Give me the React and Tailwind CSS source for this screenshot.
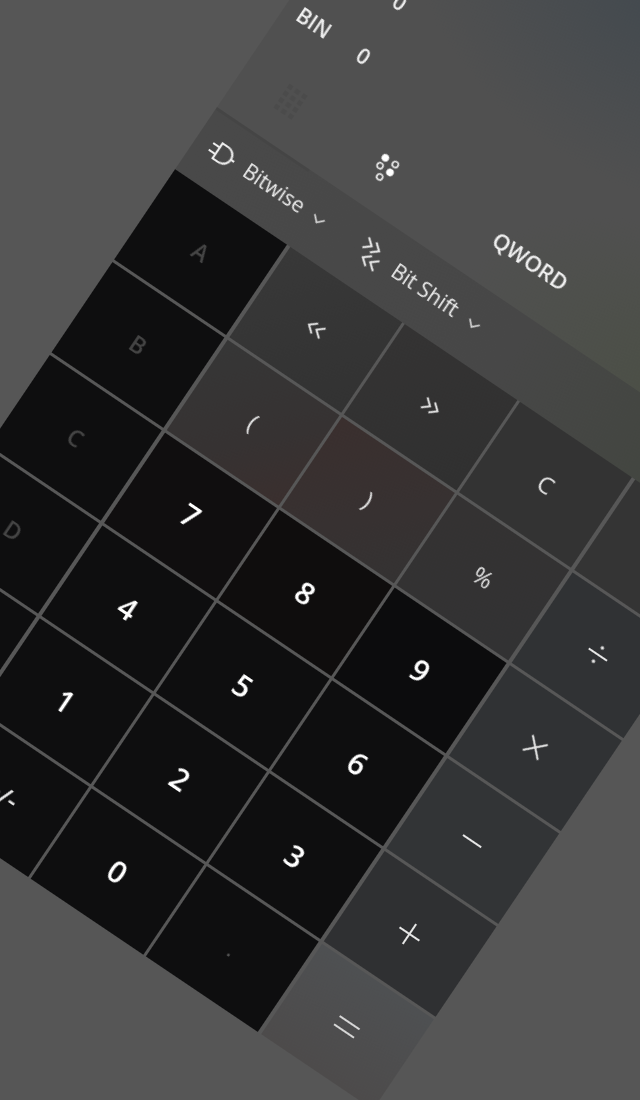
import React from 'react';

const Gate = () => (
  <svg width="30" height="26" viewBox="0 0 30 26" fill="none" stroke="#ececec" strokeWidth="2.2">
    <path d="M9 4h7a9 9 0 0 1 0 18H9z" />
    <path d="M1 9h8M1 17h8" />
    <path d="M25 13h4" />
  </svg>
);

const Shift = () => (
  <svg width="28" height="30" viewBox="0 0 28 30" fill="none" stroke="#e8e8e8" strokeWidth="2.2">
    <path d="M3 2l7 6-7 6M12 2l7 6-7 6" />
    <path d="M16 16l-7 6 7 6M25 16l-7 6 7 6" />
  </svg>
);

const Chevron = () => (
  <svg width="14" height="10" viewBox="0 0 14 10" fill="none" stroke="#dcdcdc" strokeWidth="1.7">
    <path d="M1 2l6 6 6-6" />
  </svg>
);

const BitToggle = () => (
  <svg width="25" height="31" viewBox="0 0 25 31" fill="none" stroke="#ececec" strokeWidth="1.7">
    <circle cx="6" cy="6" r="3.8" fill="#ffffff" stroke="none" />
    <circle cx="18" cy="6" r="3" />
    <circle cx="6" cy="15.5" r="3" />
    <circle cx="18" cy="15.5" r="3.8" fill="#ffffff" stroke="none" />
    <circle cx="12" cy="25" r="3" />
  </svg>
);

const Dialpad = () => (
  <svg width="24" height="32" viewBox="0 0 24 32" fill="#4b4b4b">
    {[0, 1, 2, 3].map((r) =>
      [0, 1, 2].map((c) => <rect key={`${r}-${c}`} x={c * 8.5 + 1} y={r * 8 + 1} width="5" height="5" />)
    )}
  </svg>
);

const Op = ({ d, stroke = '#e6e6e6', children }) => (
  <svg width="32" height="32" viewBox="0 0 32 32" fill="none" stroke={stroke} strokeWidth="2">
    {d && <path d={d} />}
    {children}
  </svg>
);

const digit = 'bg-[#0e0e0f] text-white text-[30px] font-semibold';
const hexKey = 'bg-[#0e0e0f] text-[#454545] text-[23px] font-semibold';
const opText = 'text-[#e6e6e6] text-[24px] font-medium';

const keys = [
  { label: 'A', cls: hexKey },
  { icon: <Op d="M15 10l-7 6 7 6M24 10l-7 6 7 6" />, cls: 'bg-[linear-gradient(135deg,#383838,#323232)]' },
  { icon: <Op d="M8 10l7 6-7 6M17 10l7 6-7 6" />, cls: 'bg-[linear-gradient(135deg,#343333,#303030)]' },
  { label: 'C', cls: `bg-[#333333] ${opText}` },
  { icon: <Op d="M12 9h14v14H12l-6-7z" />, cls: 'bg-[#343434]' },

  { label: 'B', cls: hexKey },
  { label: '(', cls: `bg-[linear-gradient(135deg,#363636,#363232_60%,#3a2f2e)] ${opText}` },
  { label: ')', cls: `bg-[linear-gradient(135deg,#3a2f2e,#373131_60%,#343232)] ${opText}` },
  { label: '%', cls: `bg-[linear-gradient(135deg,#343232,#323233)] ${opText}` },
  {
    icon: (
      <Op d="M5 16h22">
        <circle cx="16" cy="8" r="1.8" fill="#e6e6e6" stroke="none" />
        <circle cx="16" cy="24" r="1.8" fill="#e6e6e6" stroke="none" />
      </Op>
    ),
    cls: 'bg-[#303234]',
  },

  { label: 'C', cls: hexKey },
  { label: '7', cls: 'bg-[#100e0f] text-white text-[30px] font-semibold' },
  { label: '8', cls: 'bg-[#0f0d0d] text-white text-[30px] font-semibold' },
  { label: '9', cls: 'bg-[#0c0c0d] text-white text-[30px] font-semibold' },
  { icon: <Op d="M7 7l18 18M25 7L7 25" />, cls: 'bg-[#303234]' },

  { label: 'D', cls: hexKey },
  { label: '4', cls: digit },
  { label: '5', cls: digit },
  { label: '6', cls: digit },
  { icon: <Op d="M5 16h22" />, cls: 'bg-[#323436]' },

  { label: 'E', cls: hexKey },
  { label: '1', cls: digit },
  { label: '2', cls: digit },
  { label: '3', cls: digit },
  { icon: <Op d="M16 4v24M4 16h24" />, cls: 'bg-[#2f3032]' },

  { label: 'F', cls: hexKey },
  { label: '+/-', cls: 'bg-[#0e0e0f] text-[#e8e8e8] text-[26px] font-semibold' },
  { label: '0', cls: digit },
  { label: '.', cls: 'bg-[#0e0e0f] text-[#5a5a5a] text-[22px]' },
  {
    icon: <Op d="M4 11h24M4 21h24" stroke="#d6d6d6" />,
    cls: 'bg-[linear-gradient(180deg,#4e5052,#4d4b4b)]',
  },
];

const rows = [
  ['HEX', '0'],
  ['DEC', '0'],
  ['OCT', '0'],
  ['BIN', '0'],
];

export default function App() {
  return (
    <div className="relative w-[640px] h-[1100px] overflow-hidden bg-[#565656] font-['Open_Sans','Liberation_Sans',sans-serif]">
      <div className="absolute left-[217px] top-[-244.5px] w-[690px] origin-[0_351px] rotate-[34deg] rounded-br-[12px] overflow-hidden blur-[0.5px]">
        <div className="h-[351px] flex flex-col justify-end bg-[radial-gradient(ellipse_260px_170px_at_300px_30px,#444a4f,transparent),radial-gradient(ellipse_300px_170px_at_600px_340px,#4a4f43,transparent)] bg-[#505050]">
          {rows.map(([name, value]) => (
            <div key={name} className="h-[65px] shrink-0 flex items-center text-[#eeeeee] text-[21px] font-semibold">
              <span className="w-[87px] pl-[15px]">{name}</span>
              <span>{value}</span>
            </div>
          ))}
          <div className="h-[91px] shrink-0 flex items-center">
            <div className="w-[115px] flex justify-center">
              <Dialpad />
            </div>
            <div className="w-[118px] mt-[5px] flex justify-center">
              <BitToggle />
            </div>
            <div className="w-[226px] mb-[5px] text-center text-[#f0f0f0] text-[22px] font-semibold">QWORD</div>
          </div>
        </div>

        <div className="relative h-[75px] pb-[3px] flex items-center bg-[linear-gradient(90deg,#494949,#474747_55%,#40453c)] text-[#ececec] text-[21px] font-medium">
          <div className="absolute left-0 top-0 w-[112px] h-[3px] bg-[#454545]" />
          <div className="w-[180px] ml-[16px] flex items-center">
            <Gate />
            <span className="ml-[12px]">Bitwise</span>
            <span className="ml-[12px] mt-[2px]">
              <Chevron />
            </span>
          </div>
          <div className="flex items-center">
            <Shift />
            <span className="ml-[13px]">Bit Shift</span>
            <span className="ml-[14px] mt-[2px]">
              <Chevron />
            </span>
          </div>
        </div>

        <div className="grid grid-cols-5 grid-rows-6 h-[669px] gap-[3.5px] bg-[#575757]">
          {keys.map((key, i) => (
            <div key={i} className={`flex items-center justify-center ${key.cls}`}>
              {key.icon || key.label}
            </div>
          ))}
        </div>
      </div>
    </div>
  );
}
